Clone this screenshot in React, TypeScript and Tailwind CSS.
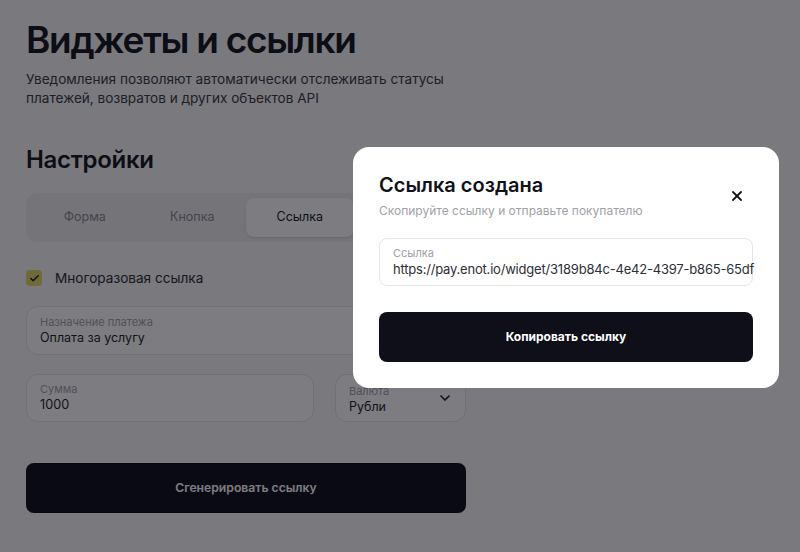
import { X, ChevronDown, Check } from 'lucide-react';

export default function App() {
  // the 4th tab sits under the modal, so its label is never seen
  const tabs = ['Форма', 'Кнопка', 'Ссылка', ''];

  return (
    <div className="relative w-[800px] h-[552px] overflow-hidden bg-[#f6f6f8] font-['Inter',sans-serif] text-[#15161e]">
      <div className="px-[26px] pt-[18px]">
        <h1 className="text-[37px] leading-[44px] font-semibold tracking-[-1.3px]">Виджеты и ссылки</h1>
        <p className="mt-[8px] w-[440px] text-[13.6px] leading-[19px] text-[#3a3b44]">
          Уведомления позволяют автоматически отслеживать статусы платежей, возвратов и других объектов API
        </p>

        <h2 className="mt-[37px] text-[24px] leading-[30px] font-semibold tracking-[-0.3px]">Настройки</h2>

        <div className="mt-[18px] w-[440px] h-[49px] rounded-xl bg-[#ececef] p-[5px] grid grid-cols-4">
          {tabs.map((tab, i) => (
            <div
              key={i}
              className={`flex items-center justify-center rounded-lg text-[12.5px] ${
                i === 2 ? 'bg-white text-[#15161e] shadow-sm' : 'text-[#8a8b93]'
              }`}
            >
              {tab}
            </div>
          ))}
        </div>

        <div className="mt-[26px] h-[20px] flex items-center gap-[13px]">
          <div className="w-[16px] h-[16px] rounded-[4px] bg-[#e4d866] flex items-center justify-center">
            <Check className="w-[11px] h-[11px] text-[#15161e]" strokeWidth={3} />
          </div>
          <span className="text-[13.6px] text-[#2a2b33]">Многоразовая ссылка</span>
        </div>

        <div className="mt-[18px] w-[440px] h-[49px] rounded-xl border border-[#e3e3e8] bg-white px-[13px] flex flex-col justify-center">
          <span className="text-[11px] leading-[14px] text-[#a3a4ac]">Назначение платежа</span>
          <span className="text-[12.5px] leading-[18px] text-[#1d1e26]">Оплата за услугу</span>
        </div>

        <div className="mt-[19px] w-[440px] flex gap-[21px]">
          <div className="flex-1 h-[48px] rounded-xl border border-[#e3e3e8] bg-white px-[13px] flex flex-col justify-center">
            <span className="text-[11px] leading-[14px] text-[#a3a4ac]">Сумма</span>
            <span className="text-[12.7px] leading-[18px] text-[#1d1e26]">1000</span>
          </div>
          <div className="w-[131px] h-[48px] rounded-xl border border-[#e3e3e8] bg-white pl-[13px] pr-[12px] flex items-center justify-between">
            <div className="flex flex-col pt-[4px]">
              <span className="text-[11px] leading-[14px] text-[#a3a4ac]">Валюта</span>
              <span className="text-[12.5px] leading-[18px] text-[#1d1e26]">Рубли</span>
            </div>
            <ChevronDown className="w-[16px] h-[16px] text-[#1d1e26]" strokeWidth={2.5} />
          </div>
        </div>

        <button className="mt-[41px] w-[440px] h-[50px] rounded-lg bg-[#0e0f19] text-white text-[12.2px] font-semibold">
          Сгенерировать ссылку
        </button>
      </div>

      {/* overlay */}
      <div className="absolute inset-0 bg-[#05050e]/[0.52]" />

      {/* modal */}
      <div className="absolute left-[353px] top-[147px] w-[426px] rounded-2xl bg-white px-[26px] pt-[25px] pb-[26px]">
        <div className="flex items-start justify-between">
          <div>
            <h3 className="text-[20px] leading-[26px] font-semibold text-[#111218]">Ссылка создана</h3>
            <p className="mt-[5px] text-[12px] leading-[16px] text-[#a0a1a8]">Скопируйте ссылку и отправьте покупателю</p>
          </div>
          <button className="mt-[16px] mr-[8px] text-[#111218]">
            <X className="w-[16px] h-[16px]" strokeWidth={2.75} />
          </button>
        </div>

        <div className="mt-[19px] h-[48px] rounded-lg border border-[#e6e6ea] px-[13px] flex flex-col justify-center">
          <span className="text-[11px] leading-[14px] text-[#a0a1a8]">Ссылка</span>
          <span className="text-[13px] leading-[18px] tracking-[-0.2px] text-[#2d2e36] whitespace-nowrap">
            https://pay.enot.io/widget/3189b84c-4e42-4397-b865-65df
          </span>
        </div>

        <button className="mt-[26px] w-full h-[50px] rounded-lg bg-[#0e0f19] text-white text-[12px] font-bold">
          Копировать ссылку
        </button>
      </div>
    </div>
  );
}
